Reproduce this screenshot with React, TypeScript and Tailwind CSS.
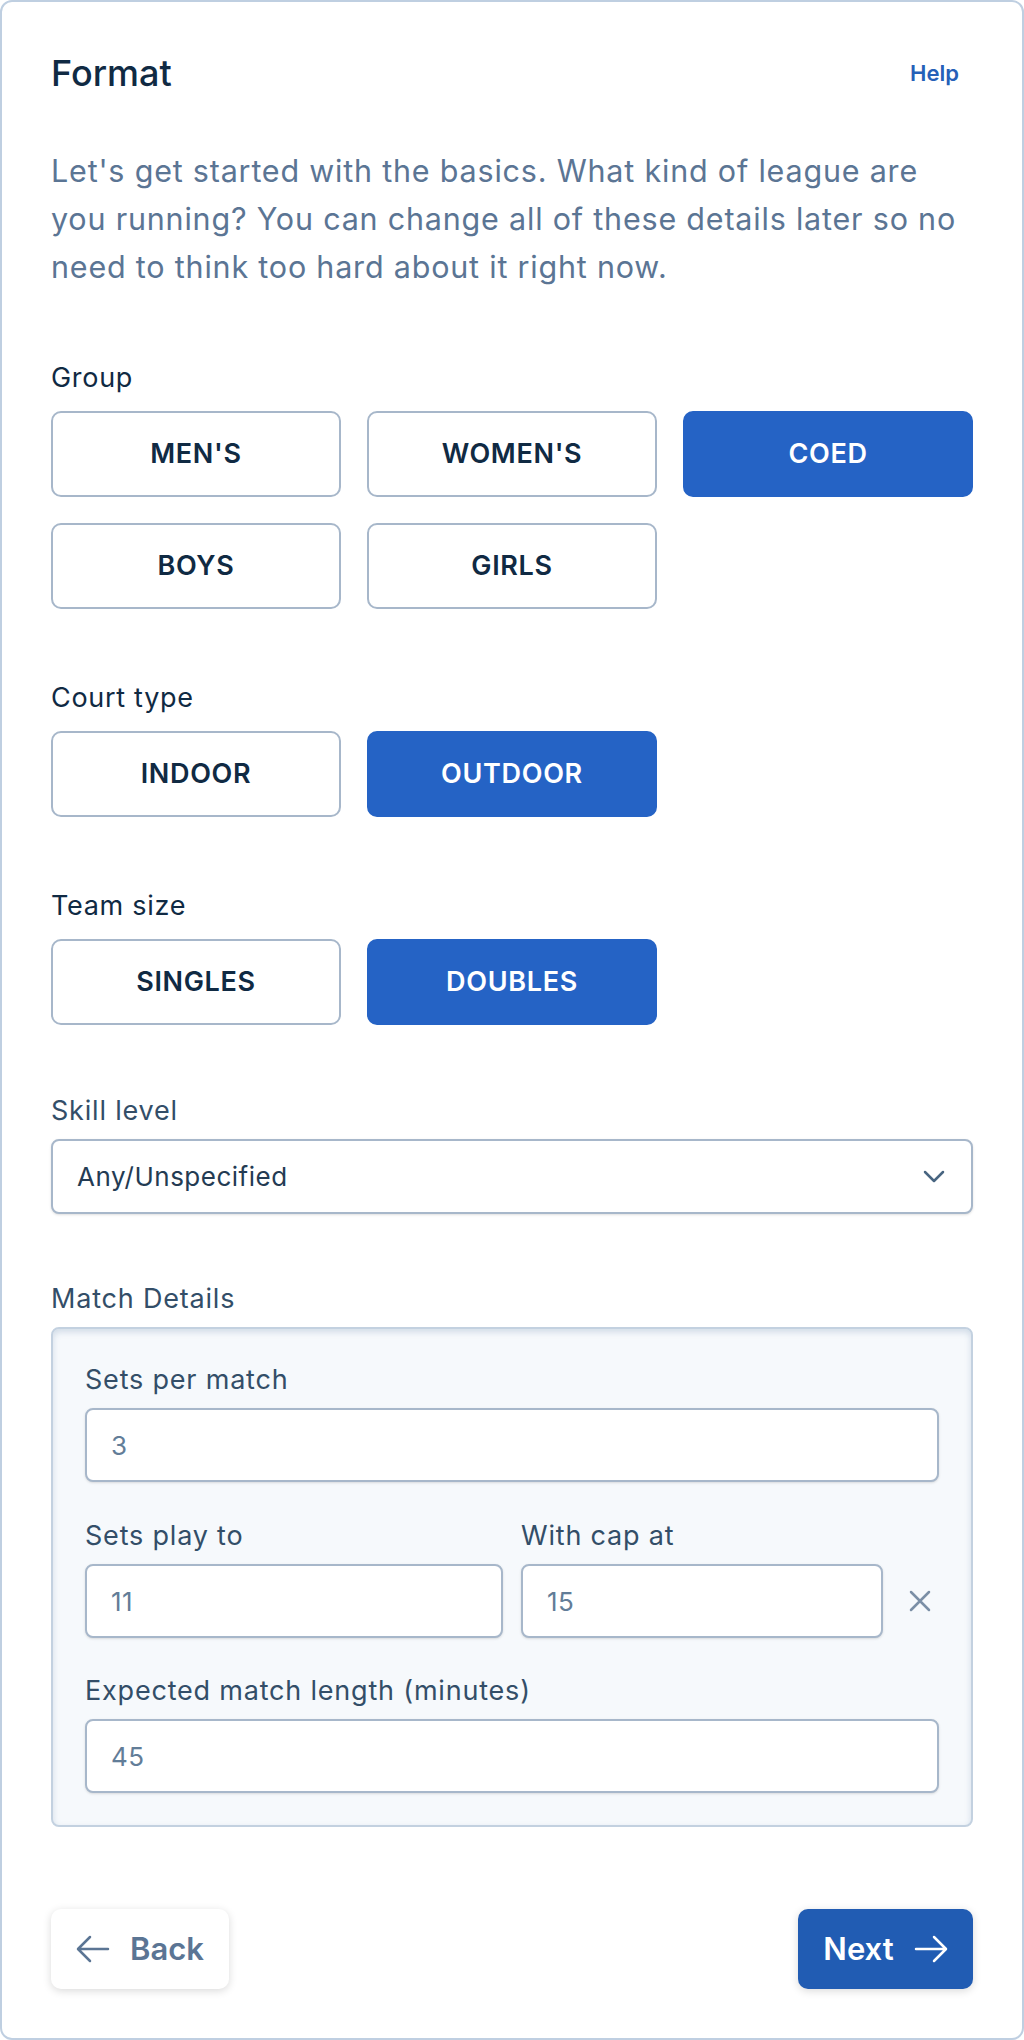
import React, { useState } from "react";

const font = { fontFamily: "Inter, 'Noto Sans', sans-serif" };

interface OptionGroupProps {
  label: string;
  options: string[];
  value: string;
  onChange: (v: string) => void;
}

const OptionGroup: React.FC<OptionGroupProps> = ({ label, options, value, onChange }) => (
  <div className="mt-[69px]">
    <div className="text-[27px] leading-[36px] tracking-[0.7px] text-[#102a43]">{label}</div>
    <div className="mt-[15px] grid grid-cols-3 gap-[26px]">
      {options.map((opt) => {
        const active = opt === value;
        return (
          <button
            key={opt}
            onClick={() => onChange(opt)}
            className={
              active
                ? "h-[86px] rounded-[10px] border-2 border-[#2563c5] bg-[#2563c5] text-[27px] font-semibold tracking-wide text-white"
                : "h-[86px] rounded-[10px] border-2 border-[#a7b7ca] bg-white text-[27px] font-semibold tracking-wide text-[#102a43]"
            }
          >
            {opt}
          </button>
        );
      })}
    </div>
  </div>
);

const FieldLabel: React.FC<{ children: React.ReactNode }> = ({ children }) => (
  <div className="text-[27px] leading-[36px] tracking-[0.8px] text-[#334e68]">{children}</div>
);

const NumInput: React.FC<{ value: string }> = ({ value }) => (
  <div className="mt-[10px] flex h-[74px] items-center rounded-[8px] border-2 border-[#a7b7ca] bg-white px-[24px] text-[26px] tracking-[0.5px] text-[#627d98] shadow-sm">
    {value}
  </div>
);

export default function App() {
  const [group, setGroup] = useState("COED");
  const [court, setCourt] = useState("OUTDOOR");
  const [team, setTeam] = useState("DOUBLES");

  return (
    <div style={font} className="h-[2040px] w-[1024px] bg-white">
      <div className="flex h-full flex-col rounded-[12px] border-2 border-[#bfcfe1] px-[49px] pt-[49px]">
        <div className="flex items-center justify-between">
          <h1 className="text-[36px] font-medium leading-[44px] text-[#102a43]">Format</h1>
          <a className="mr-[14px] text-[22px] font-semibold text-[#2560b8]">Help</a>
        </div>

        <p className="mt-[52px] text-[30.5px] leading-[48px] tracking-[0.8px] text-[#5b7594]">
          Let's get started with the basics. What kind of league are you running? You can change all
          of these details later so no need to think too hard about it right now.
        </p>

        <OptionGroup
          label="Group"
          options={["MEN'S", "WOMEN'S", "COED", "BOYS", "GIRLS"]}
          value={group}
          onChange={setGroup}
        />
        <div className="mt-[2px]" />
        <OptionGroup label="Court type" options={["INDOOR", "OUTDOOR"]} value={court} onChange={setCourt} />
        <div className="mt-[2px]" />
        <OptionGroup label="Team size" options={["SINGLES", "DOUBLES"]} value={team} onChange={setTeam} />

        <div className="mt-[68px]">
          <FieldLabel>Skill level</FieldLabel>
          <div className="mt-[10px] flex h-[75px] items-center justify-between rounded-[8px] border-2 border-[#a7b7ca] bg-white pl-[24px] pr-[26px] text-[26px] tracking-[0.5px] text-[#243b53] shadow-sm">
            <span>Any/Unspecified</span>
            <svg width="22" height="14" viewBox="0 0 22 14" fill="none">
              <path d="M2 2l9 9 9-9" stroke="#486581" strokeWidth="2.5" strokeLinecap="round" strokeLinejoin="round" />
            </svg>
          </div>
        </div>

        <div className="mt-[67px]">
          <FieldLabel>Match Details</FieldLabel>
          <div className="mt-[10px] rounded-[8px] border-2 border-[#c3d1e0] bg-[#f6f9fc] px-[32px] pb-[32px] pt-[33px] shadow-[inset_0_3px_6px_rgba(100,130,170,0.25)]">
            <FieldLabel>Sets per match</FieldLabel>
            <NumInput value="3" />

            <div className="mt-[36px] flex items-end gap-[18px]">
              <div className="w-[418px]">
                <FieldLabel>Sets play to</FieldLabel>
                <NumInput value="11" />
              </div>
              <div className="w-[362px]">
                <FieldLabel>With cap at</FieldLabel>
                <NumInput value="15" />
              </div>
              <div className="flex h-[74px] flex-1 items-center justify-center">
                <svg width="22" height="22" viewBox="0 0 22 22" fill="none">
                  <path d="M2 2l18 18M20 2L2 20" stroke="#7b8fa6" strokeWidth="2.5" strokeLinecap="round" />
                </svg>
              </div>
            </div>

            <div className="mt-[35px]">
              <FieldLabel>Expected match length (minutes)</FieldLabel>
              <NumInput value="45" />
            </div>
          </div>
        </div>

        <div className="mt-[82px] flex items-center justify-between">
          <button className="flex h-[80px] w-[178px] items-center justify-center gap-[20px] rounded-[10px] bg-white text-[31px] font-semibold text-[#5b7594] shadow-[0_2px_8px_rgba(0,0,0,0.15)]">
            <svg width="34" height="28" viewBox="0 0 34 28" fill="none">
              <path d="M32 14H3M14 2L2 14l12 12" stroke="#5b7594" strokeWidth="2.5" strokeLinecap="round" strokeLinejoin="round" />
            </svg>
            Back
          </button>
          <button className="flex h-[80px] w-[175px] items-center justify-center gap-[20px] rounded-[10px] bg-[#215cb3] text-[31px] font-semibold text-white shadow-[0_2px_8px_rgba(0,0,0,0.15)]">
            Next
            <svg width="34" height="28" viewBox="0 0 34 28" fill="none">
              <path d="M2 14h29M20 2l12 12-12 12" stroke="#ffffff" strokeWidth="2.5" strokeLinecap="round" strokeLinejoin="round" />
            </svg>
          </button>
        </div>
      </div>
    </div>
  );
}
